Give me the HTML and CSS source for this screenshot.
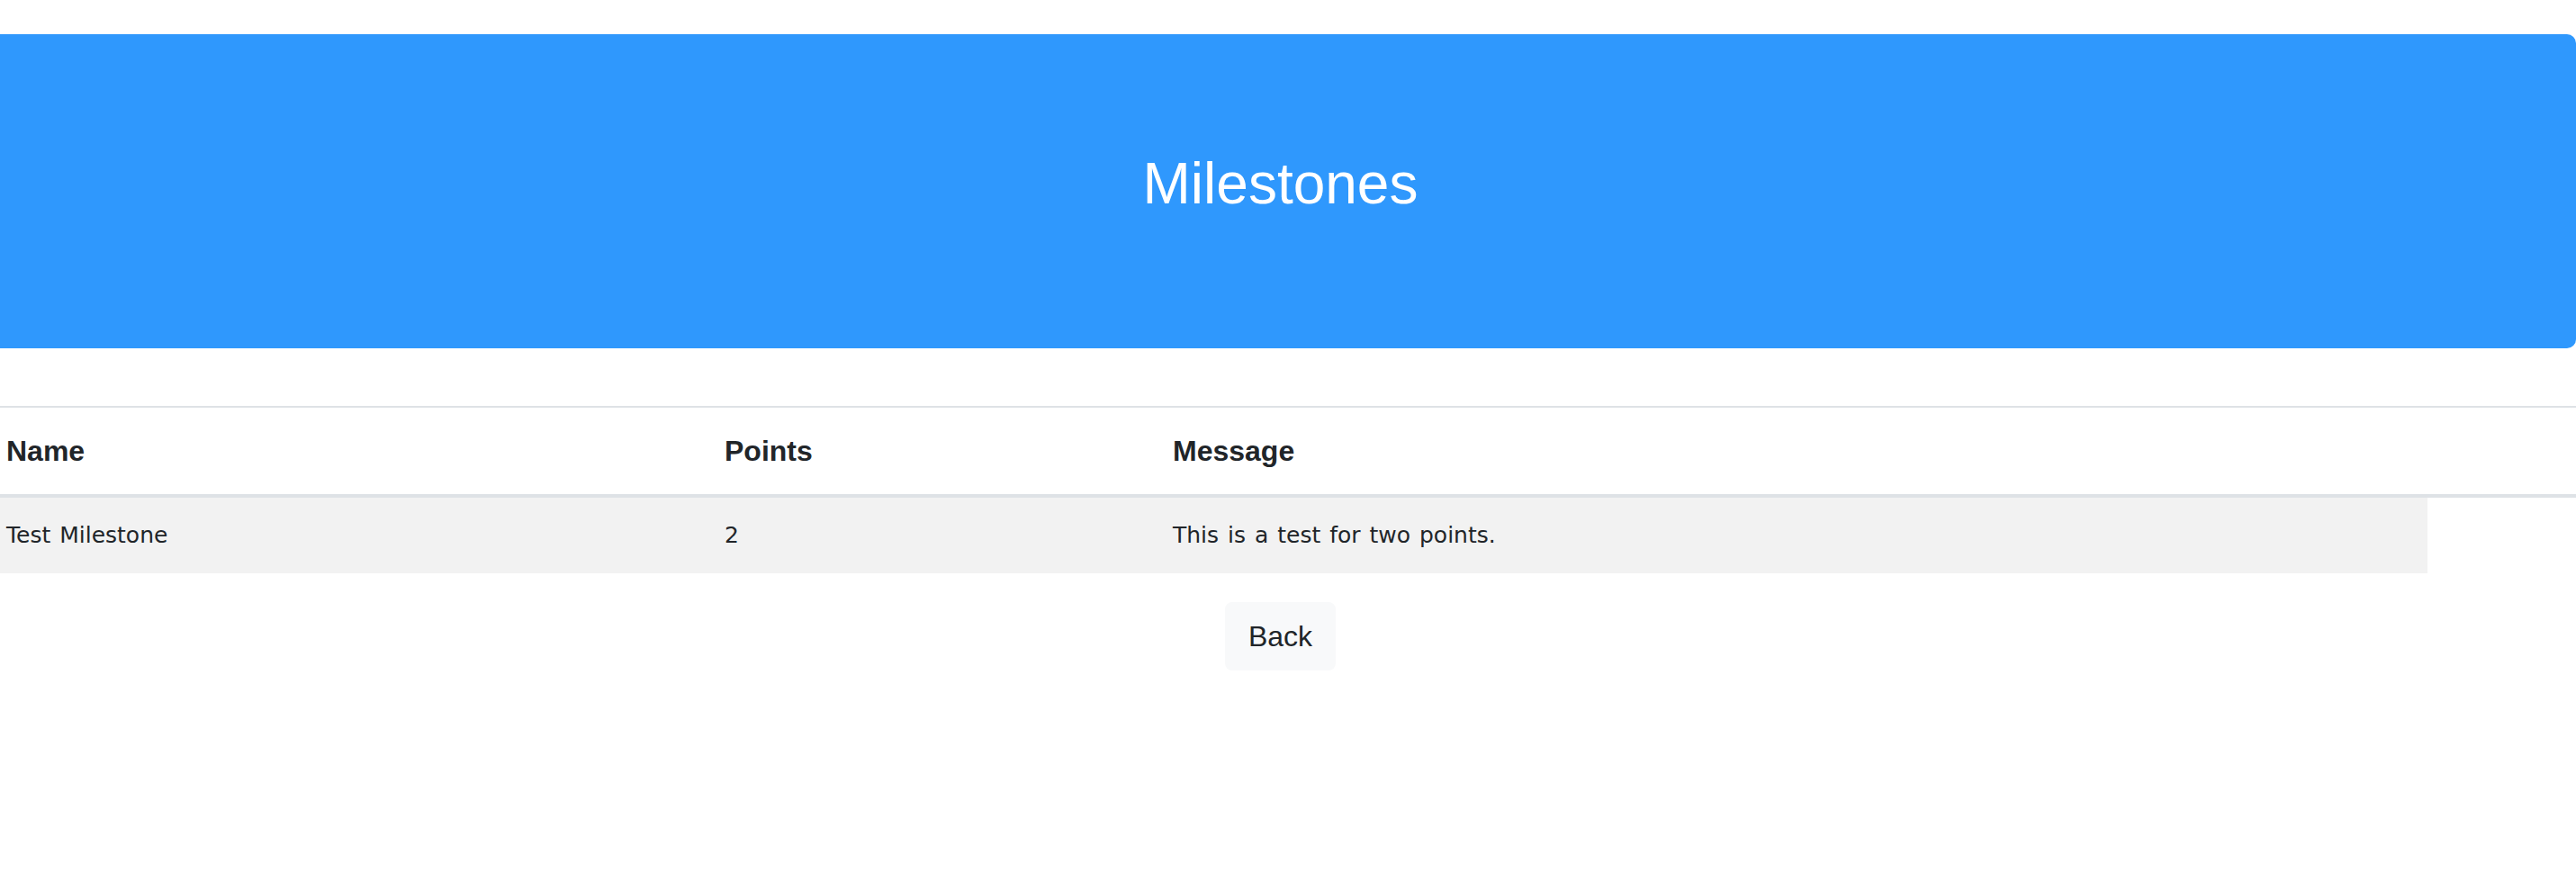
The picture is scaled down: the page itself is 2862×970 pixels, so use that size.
FILE: index.html
```html
<!DOCTYPE html>
<html lang="en">
<head>
<meta charset="utf-8">
<title>Milestones</title>
<link rel="stylesheet" href="styles.css">
</head>
<body>
<div class="page">
  <header class="banner">
    <h1 class="banner-title">Milestones</h1>
  </header>
  <table class="milestones">
    <colgroup>
      <col class="col-name">
      <col class="col-points">
      <col class="col-message">
      <col class="col-extra">
    </colgroup>
    <thead>
      <tr><th>Name</th><th>Points</th><th>Message</th><th></th></tr>
    </thead>
    <tbody>
      <tr><td>Test Milestone</td><td>2</td><td>This is a test for two points.</td></tr>
    </tbody>
  </table>
  <div class="actions">
    <button class="btn-back" type="button">Back</button>
  </div>
</div>
</body>
</html>
```

FILE: styles.css
```css
html, body {
  margin: 0;
  padding: 0;
  overflow: hidden;
  background: #ffffff;
  color: #212529;
  font-family: "Liberation Sans", Arial, sans-serif;
}

.page {
  margin-left: -17px;
}

.banner {
  margin-top: 38px;
  margin-bottom: 64px;
  padding: 128px 64px;
  background: #2f98fd;
  border-radius: 10px;
  text-align: center;
}

.banner-title {
  margin: 0 0 16px 0;
  font-family: "Liberation Sans", Arial, sans-serif;
  font-size: 64px;
  font-weight: 400;
  line-height: 1.2;
  color: #ffffff;
}

.milestones {
  border-collapse: separate;
  border-spacing: 0;
  table-layout: fixed;
  width: 2914px;
}

.col-name { width: 798px; }
.col-points { width: 498px; }
.col-message { width: 1418px; }
.col-extra { width: 200px; }

.milestones th {
  padding: 24px;
  border-top: 2px solid #dee2e6;
  border-bottom: 4px solid #dee2e6;
  text-align: left;
  font-family: "Liberation Sans", Arial, sans-serif;
  font-size: 32px;
  font-weight: 700;
  line-height: 48px;
  color: #212529;
}

.milestones td {
  padding: 24px;
  background: #f2f2f2;
  font-family: "DejaVu Sans", Verdana, sans-serif;
  font-size: 25px;
  word-spacing: 2px;
  line-height: 36px;
  color: #212529;
}

.actions {
  margin-top: 32px;
  display: flex;
  justify-content: center;
}

.btn-back {
  padding: 12px 24px;
  border: 2px solid #f8f9fa;
  border-radius: 8px;
  background: #f8f9fa;
  color: #212529;
  font-family: "Liberation Sans", Arial, sans-serif;
  font-size: 32px;
  line-height: 48px;
  cursor: pointer;
}
```
